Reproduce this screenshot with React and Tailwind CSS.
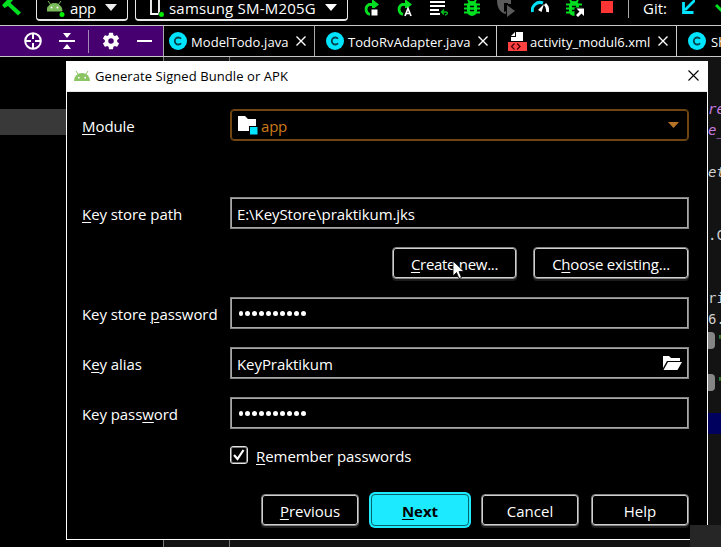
import React from "react";

const ui = "font-['Open_Sans','Noto_Sans',sans-serif]";

function Text({ className = "", children }) {
  return <span className={`block whitespace-nowrap leading-5 ${className}`}>{children}</span>;
}

function U({ children }) {
  return <span className="underline decoration-1 underline-offset-2">{children}</span>;
}

function Android({ className }) {
  return (
    <svg className={className} viewBox="0 0 16 10" fill="#8bc563">
      <path d="M0 10a8 8 0 0 1 16 0z" />
      <path d="M2 0l2.5 4M14 0l-2.5 4" stroke="#8bc563" strokeWidth="1" />
      <circle cx="4.8" cy="6.7" r=".9" fill="#fff" />
      <circle cx="11.2" cy="6.7" r=".9" fill="#fff" />
    </svg>
  );
}

function Bug({ arrow }) {
  return (
    <svg width="18" height="18" viewBox="0 0 18 18" className="shrink-0">
      <path d="M0 4.500h16M0 8.500h16M0 12.500h16M4 0l2 3M12 0l-2 3" stroke="#00e020" strokeWidth="2" />
      <rect x="3" y="1" width="10" height="15" rx="5" fill="#00e020" />
      <path d="M6 6.500h4M6 10.500h4" stroke="#000" strokeWidth="1.400" />
      {arrow && (
        <>
          <path d="M8.500 7.500h9.500V18H8.500z" fill="#000" />
          <path d="M10.500 8.500h7.500v7.500l-2.500-2.500-3.500 3.500-2-2 3.500-3.500z" fill="#fff" />
        </>
      )}
    </svg>
  );
}

function Rerun({ children }) {
  return (
    <svg width="18" height="18" viewBox="0 0 18 18" className="shrink-0">
      <path d="M8 14.500A5.400 5.400 0 0 1 7 4.500h4" fill="none" stroke="#00e020" strokeWidth="2.800" />
      <path d="M10 -1l7 5.500-7 5.500z" fill="#00e020" />
      {children}
    </svg>
  );
}

function Toolbar() {
  return (
    <div className="flex h-[25px] items-start overflow-hidden bg-black text-white">
      <svg width="22" height="18" viewBox="0 0 22 18" className="shrink-0">
        <path d="M2 5L7 0h6L10.500 3 21 12.500l-3 3L8 6 4.500 8z" fill="#00e020" />
      </svg>
      <div className="ml-[14px] flex h-[21px] w-[92px] shrink-0 items-start rounded-b-[4px] border-x-[1.500px] border-b-2 border-[#e8e8e8] pl-[10px]">
        <svg width="19" height="17" viewBox="0 0 19 17" className="shrink-0">
          <path d="M0 11C0 1 15 1 15 11zM1 1l3 4M14 1l-3 4" fill="#7cbb5c" stroke="#7cbb5c" strokeWidth="1" />
          <circle cx="4.500" cy="7.500" r="1" fill="#fff" />
          <circle cx="10.500" cy="7.500" r="1" fill="#fff" />
          <circle cx="15" cy="14.500" r="2.500" fill="#00f000" />
        </svg>
        <Text className="ml-[4px] -mt-[2px] w-[26px] text-[15px] tracking-[-0.2px]">app</Text>
        <svg width="12" height="7" viewBox="0 0 12 7" className="ml-[9px] mt-1 shrink-0"><path d="M0 0h12L6 7z" fill="#eee" /></svg>
      </div>
      <div className="ml-[7px] flex h-[21px] w-[213px] shrink-0 items-start rounded-b-[4px] border-x-[1.500px] border-b-2 border-[#e8e8e8] pl-[12px]">
        <svg width="16" height="17" viewBox="0 0 16 17" className="shrink-0">
          <path d="M3 0v14h8V0" fill="none" stroke="#fff" strokeWidth="1.800" />
          <circle cx="13.500" cy="14.500" r="2.800" fill="#00f000" stroke="#000" strokeWidth=".6" />
        </svg>
        <Text className="ml-[5px] -mt-[2px] w-[148px] text-[15px] tracking-[0.2px]">samsung SM-M205G</Text>
        <svg width="12" height="7" viewBox="0 0 12 7" className="ml-[8px] mt-1 shrink-0"><path d="M0 0h12L6 7z" fill="#fff" /></svg>
      </div>
      <div className="ml-[14px] flex shrink-0 items-start">
        <Rerun><path d="M8 8h9v9H8z" fill="#000" /><path d="M9.500 9.500h6v6h-6z" fill="#fff" /></Rerun>
        <div className="ml-[15px] flex"><Rerun><path d="M9 8h9v9H9z" fill="#000" /><path d="M10 16l3-7.500 3 7.500M11 13.500h4" fill="none" stroke="#fff" strokeWidth="1.700" /></Rerun></div>
        <svg width="19" height="18" viewBox="0 0 19 18" className="ml-[17px] shrink-0">
          <path d="M0 2h15M0 6h15M0 10h9M0 14h10" stroke="#fff" strokeWidth="2" />
          <path d="M12 12h4c2 0 2 3-1 3M14 9.500l-2.500 2.500 2.500 2.500" fill="none" stroke="#00c020" strokeWidth="1.400" />
        </svg>
        <div className="ml-[15px] flex"><Bug /></div>
        <svg width="18" height="18" viewBox="0 0 18 18" className="ml-[15px] shrink-0">
          <path d="M0 0h14v4h-3V3H7v9l2-1v3C4 13 0 9 0 0z" fill="#5a5a5a" />
          <path d="M10 5l8 6-8 6z" fill="#5a5a5a" />
        </svg>
        <svg width="18" height="14" viewBox="0 0 18 14" className="ml-[16px] shrink-0">
          <path d="M1.500 12A7.800 7.800 0 0 1 12 3" fill="none" stroke="#00dff5" strokeWidth="3" />
          <path d="M14 4a9 9 0 0 1 2.500 8" fill="none" stroke="#fff" strokeWidth="3" />
          <path d="M7 10l6-6-2.500 8z" fill="#fff" />
        </svg>
        <div className="ml-[17px] flex"><Bug arrow /></div>
        <div className="ml-[17px] mt-[1px] h-3 w-3 shrink-0 bg-[#ff3434]" />
        <div className="ml-[15px] h-[18px] w-px shrink-0 bg-[#aaa]" />
        <Text className="ml-[14px] -mt-[2px] w-[23px] text-[15px]">Git:</Text>
        <svg width="13" height="14" viewBox="0 0 13 14" className="ml-[16px] shrink-0"><path d="M13 0L3 10M1.500 2v10.500h10" fill="none" stroke="#00e5ff" strokeWidth="2.800" /></svg>
        <svg width="15" height="14" viewBox="0 0 15 14" className="ml-[20px] shrink-0"><path d="M1 5l5 5 9-10" fill="none" stroke="#00e020" strokeWidth="3" /></svg>
      </div>
    </div>
  );
}

function ClassIcon() {
  return (
    <svg width="18" height="18" viewBox="0 0 18 18" className="shrink-0">
      <circle cx="9" cy="9" r="9" fill="#00e5ff" />
      <path d="M12 6.800a3.500 3.500 0 1 0 0 4.400" fill="none" stroke="#063f48" strokeWidth="1.800" />
    </svg>
  );
}

function Cross({ className }) {
  return <svg width="10" height="10" viewBox="0 0 10 10" className={`shrink-0 ${className}`}><path d="M.5.5l9 9M9.500.5l-9 9" stroke="currentColor" strokeWidth="1.400" /></svg>;
}

function TabBar() {
  return (
    <div className="flex h-8 items-center border-y border-[#c8c8c8] bg-black text-white">
      <div className="flex h-full w-[163px] shrink-0 items-center bg-[#460070] pl-6">
        <svg width="18" height="18" viewBox="0 0 18 18" fill="none" stroke="#fff" strokeWidth="2"><circle cx="9" cy="9" r="7.800" /><path d="M9 1v6M9 11v6M1 9h6M11 9h6" /></svg>
        <svg width="16" height="16" viewBox="0 0 16 16" className="ml-[17px]"><path d="M0 8h16" stroke="#fff" strokeWidth="2" /><path d="M4 0h8L8 5zM4 16h8l-4-5z" fill="#fff" /></svg>
        <div className="ml-[13px] h-[23px] w-px bg-[#a58bb8]" />
        <svg width="18" height="18" viewBox="1.500 1.500 21 21" className="ml-[13px]" fill="#fff"><path d="M19.140 12.940c.04-.3.060-.61.060-.94 0-.32-.02-.64-.07-.94l2.030-1.580a.49.49 0 0 0 .12-.61l-1.920-3.320a.49.49 0 0 0-.59-.22l-2.390.96c-.5-.38-1.030-.7-1.620-.94l-.36-2.540a.48.48 0 0 0-.48-.41h-3.840a.48.48 0 0 0-.47.41l-.36 2.540c-.59.24-1.130.57-1.620.94l-2.390-.96a.48.48 0 0 0-.59.22L2.740 8.870a.48.48 0 0 0 .12.61l2.030 1.580c-.05.3-.09.63-.09.94s.02.64.07.94l-2.030 1.580a.49.49 0 0 0-.12.61l1.920 3.320c.12.22.37.29.59.22l2.390-.96c.5.38 1.030.7 1.620.94l.36 2.540c.05.24.24.41.48.41h3.840c.24 0 .44-.17.47-.41l.36-2.540c.59-.24 1.130-.56 1.620-.94l2.390.96c.22.08.47 0 .59-.22l1.920-3.320a.48.48 0 0 0-.12-.61zM12 15.200a3.200 3.200 0 1 1 0-6.400 3.200 3.200 0 0 1 0 6.400z" /></svg>
        <div className="ml-[17px] h-[2px] w-[15px] bg-white" />
      </div>
      <div className="flex h-full w-[152px] shrink-0 items-center border-x border-[#aaa] pl-[5px]">
        <ClassIcon />
        <Text className="ml-[4px] mt-[2px] w-[99px] text-[13px] tracking-[0.08px]">ModelTodo.java</Text>
        <Cross className="ml-[6px]" />
      </div>
      <div className="flex h-full w-[182px] shrink-0 items-center border-r border-[#ccc] pl-[11px]">
        <ClassIcon />
        <Text className="ml-[4px] mt-[2px] w-[123px] text-[13px] tracking-[0.06px]">TodoRvAdapter.java</Text>
        <Cross className="ml-[7px]" />
      </div>
      <div className="flex h-full w-[180px] shrink-0 items-center border-r border-[#ccc] pl-[11px]">
        <svg width="19" height="19" viewBox="0 0 19 19" className="shrink-0"><path d="M8 0h7v9H3V5h5z" fill="#fff" /><path d="M3 4l4-4v4z" fill="#fff" /><path d="M0 10h19v9H0z" fill="#ff4040" /><path d="M6.500 11.500l-3 3 3 3M9 11.500l3 3-3 3" fill="none" stroke="#400" strokeWidth="1.300" /></svg>
        <Text className="ml-[3px] mt-[2px] w-[120px] text-[13px] tracking-[0.02px]">activity_modul6.xml</Text>
        <Cross className="ml-[8px]" />
      </div>
      <div className="flex h-full min-w-0 flex-1 items-center overflow-hidden pl-[11px]">
        <ClassIcon />
        <Text className="ml-[5px] mt-[2px] text-[13px]">Sh</Text>
      </div>
    </div>
  );
}

function Editor() {
  return (
    <div className="flex h-[490px] bg-[#131313]">
      <div className="w-[163px] bg-black pt-[52px]"><div className="h-[26px] bg-[#393939]" /></div>
      <div className="w-[67px] border-x border-[#777] bg-[#141414]" />
      <div className="flex flex-1 flex-col items-end font-['DejaVu_Sans_Mono',monospace] text-[14px] leading-[21px] text-[#d0d0d0]">
        <div className="w-[13px] overflow-hidden whitespace-nowrap pt-[42px]">
          <div className="h-[21px] italic text-[#c77be0]">re</div>
          <div className="h-[21px] italic text-[#c77be0]">e_</div>
          <div className="mt-[21px] h-[21px] italic">et</div>
          <div className="mt-[42px] h-[21px]">.C</div>
          <div className="mt-[42px] h-[21px]">ri</div>
          <div className="h-[21px]">6.</div>
          <div className="flex h-[21px] text-[#44a544]"><div className="mt-[2px] h-[17px] w-[7px] shrink-0 rounded-r bg-[#858585]" /><span className="ml-[2px]">"</span></div>
          <div className="mt-[21px] flex h-[21px] text-[#44a544]"><div className="mt-[2px] h-[17px] w-[7px] shrink-0 rounded-r bg-[#858585]" /><span className="ml-[2px]">"</span></div>
          <div className="mt-[20px] h-[21px] bg-[#00005f]" />
        </div>
      </div>
    </div>
  );
}

const edge = "border border-[#858585] shadow-[inset_0_0_0_1px_#a8a8a8]";

function Row({ label, children, className = "" }) {
  return (
    <div className={`flex h-8 items-center ${className}`}>
      <div className="w-[148px] shrink-0 pt-[2px] tracking-[-0.07px]"><Text>{label}</Text></div>
      {children}
    </div>
  );
}

function Field({ children, className = "" }) {
  return <div className={`flex h-8 w-[459px] items-center pl-[6px] ${edge} ${className}`}>{children}</div>;
}

function Dots() {
  return <div className="flex gap-[2.600px] pl-[1.500px] pt-px">{Array.from({ length: 10 }, (_, i) => <i key={i} className="block size-[4.400px] rounded-full bg-white" />)}</div>;
}

function Button({ className = "", children }) {
  return <button className={`flex h-8 shrink-0 items-center justify-center rounded-[4px] border border-[#858585] bg-black pt-px shadow-[inset_0_0_0_1px_#d0d0d0,0_2px_0_#1b1b1b] ${className}`}><Text>{children}</Text></button>;
}

function Dialog() {
  return (
    <div className="absolute left-[66px] top-[61px] flex h-[479px] w-[642px] flex-col border border-white bg-black text-[15px] text-white">
      <div className="flex h-[30px] shrink-0 items-center border-b border-[#e8e8e8] bg-white pb-[2px] pl-[7px] pr-2 text-black">
        <Android className="h-[10px] w-4" />
        <Text className="ml-[5px] flex-1 text-[13px] tracking-[0.08px]">Generate Signed Bundle or APK</Text>
        <svg width="11" height="11" viewBox="0 0 11 11"><path d="M.5.5l10 10M10.500.5l-10 10" stroke="#000" strokeWidth="1.100" /></svg>
      </div>
      <div className="flex flex-col pl-[15px] pr-[18px] pt-[17px]">
        <Row label={<><U>M</U>odule</>}>
          <div className="flex h-8 w-[459px] items-center rounded-[4px] border border-[#704511] pl-[7px] pr-[9px] shadow-[inset_0_0_0_1px_#704511]">
            <svg width="20" height="19" viewBox="0 0 20 19"><path d="M0 0h7l3 3h8v12H0z" fill="#fff" /><path d="M11 10h9v9h-9z" fill="#000" /><path d="M12 11h7.500v7.500H12z" fill="#00e5ff" /></svg>
            <Text className="ml-[3px] mt-[2px] flex-1 tracking-[-0.2px] text-[#cd7a1a]">app</Text>
            <svg width="11" height="6" viewBox="0 0 11 6"><path d="M0 0h11L5.500 6z" fill="#b77425" /></svg>
          </div>
        </Row>
        <Row className="mt-14" label={<><U>K</U>ey store path</>}><Field><Text className="mt-[2px] tracking-[-0.08px]">E:\KeyStore\praktikum.jks</Text></Field></Row>
        <div className="mt-[18px] flex justify-end gap-4">
          <Button className="w-[125px] tracking-[-0.3px]"><U>C</U>reate new...</Button>
          <Button className="w-[156px] tracking-[-0.22px]">C<U>h</U>oose existing...</Button>
        </div>
        <Row className="mt-[18px]" label={<>Key store <U>p</U>assword</>}><Field><Dots /></Field></Row>
        <Row className="mt-[18px]" label={<>K<U>e</U>y alias</>}>
          <Field className="justify-between pr-[6px]">
            <Text className="mt-[2px] tracking-[-0.07px]">KeyPraktikum</Text>
            <svg width="19" height="14" viewBox="0 0 19 14"><path d="M0 0h6l2 2h9v3H4L0 12z" fill="#fff" /><path d="M5 6h14l-4.500 8H.5z" fill="#fff" /></svg>
          </Field>
        </Row>
        <Row className="mt-[18px]" label={<>Key pass<U>w</U>ord</>}><Field><Dots /></Field></Row>
        <div className="ml-[148px] mt-[17px] flex h-[18px] items-center">
          <div className="flex size-[18px] items-center justify-center rounded-[3px] border border-[#e5e5e5] shadow-[inset_0_0_0_1px_#777]">
            <svg width="12" height="12" viewBox="0 0 12 12"><path d="M1 6l3.500 4L10.500 1" fill="none" stroke="#fff" strokeWidth="2.200" /></svg>
          </div>
          <Text className="ml-[8px] mt-[2px] tracking-[-0.06px]"><U>R</U>emember passwords</Text>
        </div>
        <div className="mt-[28px] flex h-9 items-center justify-end">
          <Button className="w-[98px]"><U>P</U>revious</Button>
          <div className="ml-[10px] h-9 w-[102px] rounded-[6px] bg-[#1ceaff] p-[2px]">
            <button className="flex h-8 w-[98px] items-center justify-center rounded-[4px] border border-[#07626b] pt-px font-bold text-black"><Text><U>N</U>ext</Text></button>
          </div>
          <Button className="ml-[10px] w-[98px]">Cancel</Button>
          <Button className="ml-3 w-[98px]">Help</Button>
        </div>
      </div>
      <svg width="13" height="20" viewBox="0 0 13 20" className="absolute left-[385px] top-[198px]"><path d="M1 1v15l3.500-3.500L7 18.500l2.500-1-2.500-6h5z" fill="#fff" stroke="#000" strokeWidth=".8" /></svg>
    </div>
  );
}

export default function App() {
  return (
    <main className={`relative h-[547px] w-[721px] overflow-hidden bg-black ${ui}`}>
      <Toolbar />
      <TabBar />
      <Editor />
      <Dialog />
      <div className="absolute bottom-0 right-0 h-[22px] w-[31px] bg-[#262626]" />
    </main>
  );
}
